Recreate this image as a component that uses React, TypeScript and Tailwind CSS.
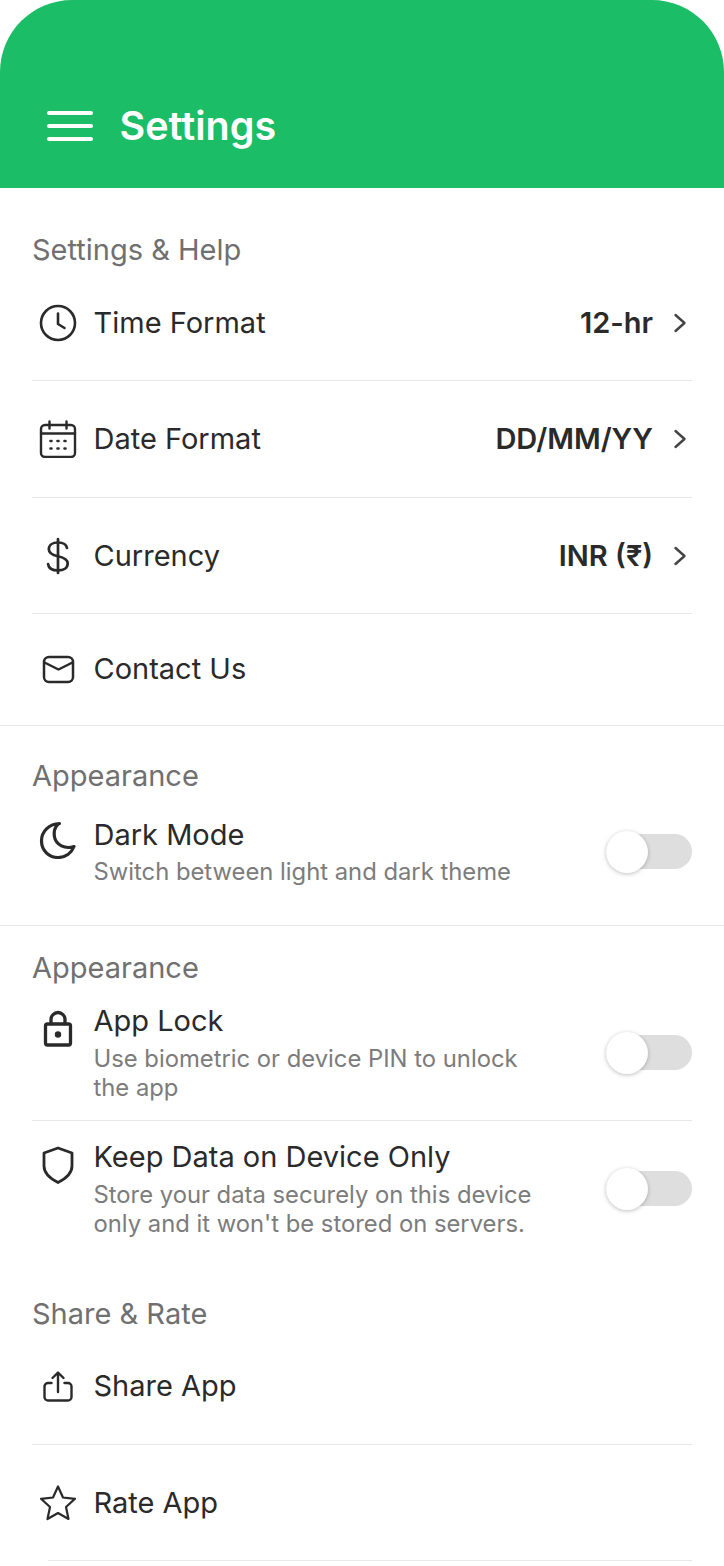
import React from "react";

const ic = "fill-none stroke-[#2a2a2a] [stroke-linecap:round] [stroke-linejoin:round]";

const Clock = () => (
  <svg width="38" height="38" viewBox="0 0 38 38" className={ic} strokeWidth="2.6">
    <circle cx="19" cy="19" r="17" />
    <path d="M19 9.500V20l6.500 4" />
  </svg>
);
const Calendar = () => (
  <svg width="38" height="38" viewBox="0 0 38 38" className={ic} strokeWidth="2.4">
    <rect x="2" y="5" width="34" height="32" rx="4" />
    <path d="M2 13.500h34M10.500 1.500v7M27.500 1.500v7" />
    <path d="M11.500 21h1M18.500 21h1M25.500 21h1M11.500 28.500h1M18.500 28.500h1M25.500 28.500h1" strokeWidth="2.6" />
  </svg>
);
const Dollar = () => (
  <svg width="38" height="38" viewBox="0 0 38 38" className={ic} strokeWidth="2.700">
    <path d="M19 2v34" />
    <path d="M28 11c-.6-3.400-4-5.500-9-5.500-5.400 0-9.200 2.600-9.200 6.800 0 4.200 3.500 5.800 9.200 7 6 1.300 9.700 3 9.700 7.200 0 4.300-4 6.900-9.700 6.900-5.600 0-9.300-2.200-9.900-6.200" />
  </svg>
);
const Mail = () => (
  <svg width="38" height="38" viewBox="0 0 38 38" className={ic} strokeWidth="2.500">
    <rect x="5" y="7" width="29" height="25" rx="5" />
    <path d="M5.500 12.500l14 7 14-7" />
  </svg>
);
const Moon = () => (
  <svg width="38" height="38" viewBox="0 0 38 38" className={ic} strokeWidth="3.200">
    <path d="M20.500 2.500C10.500 3 2.500 10 2.500 20c0 9.500 7.500 16.500 16.500 16.500 7.500 0 13.500-4.500 16-11-9 3-18-1.500-19.500-9.500-1-6 1-11 4.500-13.500z" />
  </svg>
);
const Lock = () => (
  <svg width="38" height="38" viewBox="0 0 38 38" className={ic} strokeWidth="3.300">
    <rect x="6.500" y="14" width="25" height="21" rx="2" />
    <path d="M12 13.500V9.500a7 7 0 0 1 14 0v4" />
    <circle cx="19" cy="24.500" r="3.200" className="fill-[#2a2a2a] stroke-none" />
  </svg>
);
const Shield = () => (
  <svg width="38" height="38" viewBox="0 0 38 38" className={ic} strokeWidth="2.800">
    <path d="M19 2l14 5v13c0 7.500-6 12.500-14 16.500C11 32.500 5 27.500 5 20V7z" />
  </svg>
);
const Share = () => (
  <svg width="38" height="38" viewBox="0 0 38 38" className={ic} strokeWidth="2.400">
    <path d="M19 6v19M13.500 11L19 5.500 24.500 11" />
    <path d="M12.500 16H9a3.500 3.500 0 0 0-3.500 3.500V30A3.500 3.500 0 0 0 9 33.500h20a3.500 3.500 0 0 0 3.500-3.500V19.500A3.500 3.500 0 0 0 29 16h-3.500" />
  </svg>
);
const Star = () => (
  <svg width="38" height="38" viewBox="0 0 38 38" className={ic} strokeWidth="2.200">
    <path d="M19 2.500l5 11 12 1.300-9 8.200 2.500 12L19 29l-10.500 6 2.500-12-9-8.200 12-1.300z" />
  </svg>
);
const Chevron = () => (
  <svg width="14" height="20" viewBox="0 0 14 20" className="fill-none stroke-[#444444] [stroke-linecap:round] [stroke-linejoin:round]" strokeWidth="2.400">
    <path d="M2.500 2l9 8-9 8" />
  </svg>
);

const Row = ({ h, icon, label, value, divider = true, inset = "mx-8" }: { h: string; icon: React.ReactNode; label: string; value?: string; divider?: boolean; inset?: string }) => (
  <div className={`${h} flex flex-col`}>
    <div className="flex flex-1 items-center pl-[39px] pr-[37px]">
      <span className="w-[38px] shrink-0">{icon}</span>
      <span className="ml-[16.500px] flex-1 text-[29px] text-[#2a2a2a]">{label}</span>
      {value && <span className="text-[29px] font-semibold text-[#2a2a2a]">{value}</span>}
      {value && <span className="ml-[20px] flex"><Chevron /></span>}
    </div>
    {divider && <div className={`${inset} h-px bg-[#e8e8e8]`} />}
  </div>
);

const Toggle = () => (
  <div className="relative h-[35px] w-[86px] rounded-full bg-[#dedede]">
    <div className="absolute left-0 top-[-3px] h-[42px] w-[42px] rounded-full bg-white shadow-[0_1px_4px_rgba(0,0,0,0.25)]" />
  </div>
);

const ToggleRow = ({ icon, title, sub, className, iconTop, toggleTop, subTop }: { icon: React.ReactNode; title: string; sub: React.ReactNode; className: string; iconTop: string; toggleTop: string; subTop: string }) => (
  <div className={`flex pl-[39px] pr-8 ${className}`}>
    <span className={`w-[38px] shrink-0 ${iconTop}`}>{icon}</span>
    <div className="ml-[16.500px] flex-1">
      <div className="text-[29px] leading-[36px] text-[#2a2a2a]">{title}</div>
      <div className={`${subTop} text-[23.800px] leading-[29px] text-[#7c7c7c]`}>{sub}</div>
    </div>
    <div className={toggleTop}><Toggle /></div>
  </div>
);

const Heading = ({ children, className }: { children: React.ReactNode; className: string }) => (
  <div className={`px-8 text-[29px] leading-[36px] text-[#707070] ${className}`}>{children}</div>
);

export default function App() {
  return (
    <div className="h-[1566px] w-[724px] overflow-hidden bg-white font-['Inter',sans-serif]">
      <header className="flex h-[188px] items-center rounded-t-[72px] bg-[#1cbd67] pl-[47px] pt-[64px]">
        <div className="flex w-[46px] flex-col gap-[9px]">
          <div className="h-[4px] rounded-full bg-white" />
          <div className="h-[4px] rounded-full bg-white" />
          <div className="h-[4px] rounded-full bg-white" />
        </div>
        <h1 className="ml-[26.500px] text-[39.500px] font-semibold leading-[40px] text-white">Settings</h1>
      </header>

      <Heading className="mt-[44px]">Settings &amp; Help</Heading>
      <div className="mt-[-3px]">
        <Row h="h-[116px]" icon={<Clock />} label="Time Format" value="12-hr" />
        <Row h="h-[117px]" icon={<Calendar />} label="Date Format" value="DD/MM/YY" />
        <Row h="h-[116px]" icon={<Dollar />} label="Currency" value="INR (₹)" />
        <div className="flex h-[111px] flex-col pb-[2px]">
          <Row h="h-full" icon={<Mail />} label="Contact Us" divider={false} />
        </div>
      </div>
      <div className="h-px bg-[#e8e8e8]" />

      <Heading className="mt-[32px]">Appearance</Heading>
      <ToggleRow icon={<Moon />} title="Dark Mode" sub="Switch between light and dark theme" className="mt-[23px] h-[108px]" subTop="mt-[4px]" iconTop="mt-[4px]" toggleTop="mt-[17px]" />
      <div className="h-px bg-[#e8e8e8]" />

      <Heading className="mt-[24px]">Appearance</Heading>
      <ToggleRow icon={<Lock />} title="App Lock" sub={<>Use biometric or device PIN to unlock<br />the app</>} className="mt-[17px] h-[117px]" subTop="mt-[5px]" iconTop="mt-[7px]" toggleTop="mt-[32px]" />
      <div className="mx-8 h-px bg-[#e8e8e8]" />
      <ToggleRow icon={<Shield />} title="Keep Data on Device Only" sub={<>Store your data securely on this device<br />only and it won't be stored on servers.</>} className="mt-[18px] h-[120px]" subTop="mt-[5px]" iconTop="mt-[7px]" toggleTop="mt-[32px]" />

      <Heading className="mt-[37px]">Share &amp; Rate</Heading>
      <div className="mt-[-4px]">
        <Row h="h-[117px]" icon={<Share />} label="Share App" />
        <Row h="h-[116px]" icon={<Star />} label="Rate App" inset="ml-[48px] mr-8" />
      </div>
    </div>
  );
}
